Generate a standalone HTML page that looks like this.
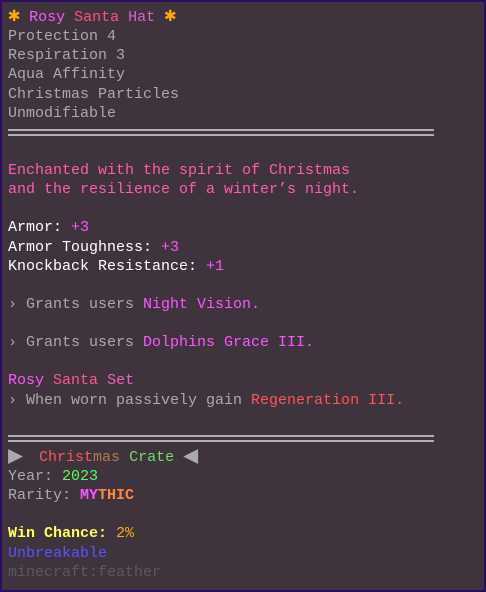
<!DOCTYPE html>
<html><head><meta charset="utf-8"><style>
html,body{margin:0;padding:0;background:#3f343e;}
.box{position:absolute;left:0;top:0;width:482px;height:588px;border:2px solid #2b0c5e;background:#3f343e;overflow:hidden}
.c{position:absolute;left:6px;top:6px;font-family:"Liberation Mono",monospace;font-size:15px;line-height:19.14px;color:#aaaaaa}
.l{height:19.14px;white-space:pre}
.sep{height:19.14px;position:relative}
.sep:before,.sep:after{content:"";position:absolute;left:0;width:426px;height:2px;background:#b0b0b0}
.sep:before{top:6px}.sep:after{top:11px}
.w{color:#fff}.p{color:#ff55ff}.pk{color:#ff5cb0}.r{color:#ff5555}.g{color:#55ff55}.y{color:#ffff55;font-weight:bold}.o{color:#ffaa00}.b{color:#5555ff}.d{color:#5a5a5a}
.star{color:#ffaa00;font-size:20px;font-weight:bold;line-height:15px}
.tri{color:#aaa;font-size:25px;line-height:15px;display:inline-block;width:22px;vertical-align:-2px}
</style></head><body><div class="box"><div class="c"><div class="l"><span class="star">✱</span> <span style="color:#ff55ff">Rosy</span> <span style="color:#ff5080">Santa</span> <span style="color:#e060d0">Hat</span> <span class="star">✱</span></div><div class="l">Protection 4</div><div class="l">Respiration 3</div><div class="l">Aqua Affinity</div><div class="l">Christmas Particles</div><div class="l">Unmodifiable</div><div class="sep"></div><div class="l"></div><div class="l pk">Enchanted with the spirit of Christmas</div><div class="l pk">and the resilience of a winter’s night.</div><div class="l"></div><div class="l w">Armor: <span class="p">+3</span></div><div class="l w">Armor Toughness: <span class="p">+3</span></div><div class="l w">Knockback Resistance: <span class="p">+1</span></div><div class="l"></div><div class="l">› Grants users <span class="p">Night Vision.</span></div><div class="l"></div><div class="l">› Grants users <span class="p">Dolphins Grace III.</span></div><div class="l"></div><div class="l"><span class="p">Rosy</span> <span style="color:#ff5590">Santa</span> <span style="color:#f060c0">Set</span></div><div class="l">› When worn passively gain <span class="r">Regeneration III.</span></div><div class="l"></div><div class="sep"></div><div class="l"><span class="tri">▶</span> <span class="r">Christ</span><span style="color:#b07a50">mas</span> <span style="color:#70dd60">Crate</span> <span class="tri">◀</span></div><div class="l">Year: <span class="g">2023</span></div><div class="l">Rarity: <span style="color:#ff55ff;font-weight:bold">MY</span><span style="color:#ff8840;font-weight:bold">THIC</span></div><div class="l"></div><div class="l"><span class="y">Win Chance:</span> <span class="o">2%</span></div><div class="l b">Unbreakable</div><div class="l d">minecraft:feather</div></div></div></body></html>
